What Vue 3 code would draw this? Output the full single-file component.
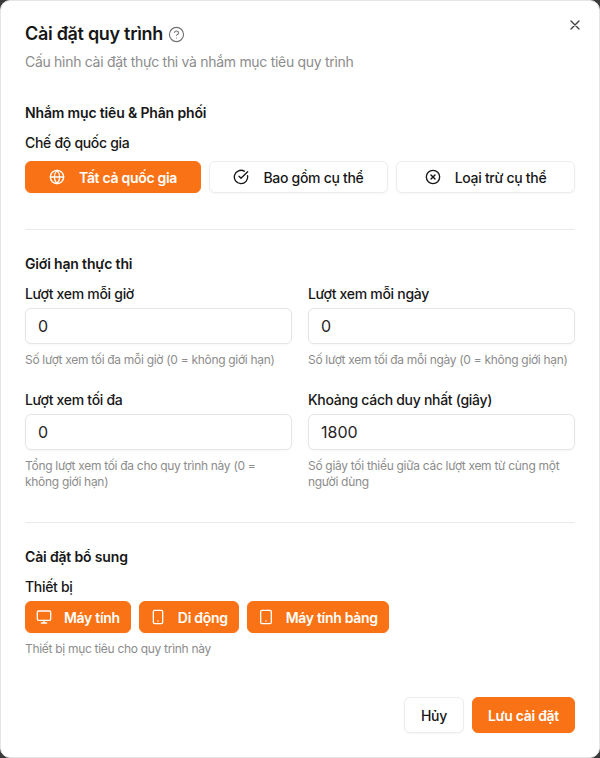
<template>
  <div class="backdrop">
    <div class="modal">
      <button class="close" aria-label="Đóng">
        <svg width="16" height="16" viewBox="0 0 24 24" fill="none" stroke="currentColor" stroke-width="2" stroke-linecap="round">
          <path d="M18 6 6 18M6 6l12 12" />
        </svg>
      </button>

      <header class="head">
        <h2 class="title">
          Cài đặt quy trình
          <svg width="17" height="17" viewBox="0 0 24 24" fill="none" stroke="#737373" stroke-width="1.6" stroke-linecap="round" stroke-linejoin="round">
            <circle cx="12" cy="12" r="10" />
            <path d="M9.1 9a3 3 0 0 1 5.8 1c0 2-3 3-3 3" />
            <path d="M12 17h.01" />
          </svg>
        </h2>
        <p class="sub">Cấu hình cài đặt thực thi và nhắm mục tiêu quy trình</p>
      </header>

      <section class="section first">
        <h3 class="sec-title">Nhắm mục tiêu &amp; Phân phối</h3>
        <div class="label mode-label">Chế độ quốc gia</div>
        <div class="modes">
          <button v-for="m in modes" :key="m.text" class="btn" :class="{ on: m.on }">
            <svg width="16" height="16" viewBox="0 0 24 24" fill="none" stroke="currentColor" stroke-width="2" stroke-linecap="round" stroke-linejoin="round">
              <path v-for="d in m.paths" :key="d" :d="d" />
            </svg>
            <span>{{ m.text }}</span>
          </button>
        </div>
      </section>

      <hr class="line" />

      <section class="section">
        <h3 class="sec-title">Giới hạn thực thi</h3>
        <div class="fields">
          <div v-for="f in fields" :key="f.label" class="field">
            <label class="label">{{ f.label }}</label>
            <input class="input" :value="f.value" />
            <p class="help">{{ f.help }}</p>
          </div>
        </div>
      </section>

      <hr class="line second" />

      <section class="section">
        <h3 class="sec-title">Cài đặt bổ sung</h3>
        <div class="label">Thiết bị</div>
        <div class="devices">
          <button v-for="d in devices" :key="d.text" class="btn on dev">
            <svg width="16" height="16" viewBox="0 0 24 24" fill="none" stroke="currentColor" stroke-width="2" stroke-linecap="round" stroke-linejoin="round">
              <rect :x="d.rect[0]" :y="d.rect[1]" :width="d.rect[2]" :height="d.rect[3]" rx="2" />
              <path :d="d.path" />
            </svg>
            <span>{{ d.text }}</span>
          </button>
        </div>
        <p class="help">Thiết bị mục tiêu cho quy trình này</p>
      </section>

      <footer class="foot">
        <button class="btn cancel">Hủy</button>
        <button class="btn on save">Lưu cài đặt</button>
      </footer>
    </div>
  </div>
</template>

<script setup>
const modes = [
  {
    text: 'Tất cả quốc gia',
    on: true,
    paths: [
      'M22 12a10 10 0 1 1-20 0 10 10 0 0 1 20 0Z',
      'M2 12h20',
      'M12 2a15 15 0 0 1 4 10 15 15 0 0 1-4 10 15 15 0 0 1-4-10 15 15 0 0 1 4-10Z',
    ],
  },
  {
    text: 'Bao gồm cụ thể',
    paths: ['M21.8 10A10 10 0 1 1 17 3.3', 'm9 11 3 3L22 4'],
  },
  {
    text: 'Loại trừ cụ thể',
    paths: ['M22 12a10 10 0 1 1-20 0 10 10 0 0 1 20 0Z', 'm15 9-6 6', 'm9 9 6 6'],
  },
]

const fields = [
  { label: 'Lượt xem mỗi giờ', value: '0', help: 'Số lượt xem tối đa mỗi giờ (0 = không giới hạn)' },
  { label: 'Lượt xem mỗi ngày', value: '0', help: 'Số lượt xem tối đa mỗi ngày (0 = không giới hạn)' },
  { label: 'Lượt xem tối đa', value: '0', help: 'Tổng lượt xem tối đa cho quy trình này (0 = không giới hạn)' },
  { label: 'Khoảng cách duy nhất (giây)', value: '1800', help: 'Số giây tối thiểu giữa các lượt xem từ cùng một người dùng' },
]

const devices = [
  { text: 'Máy tính', rect: [2, 3, 20, 14], path: 'M8 21h8M12 17v4' },
  { text: 'Di động', rect: [5, 2, 14, 20], path: 'M12 18h.01' },
  { text: 'Máy tính bảng', rect: [4, 2, 16, 20], path: 'M12 18h.01' },
]
</script>

<style>
html,
body {
  margin: 0;
  background: #3a3a3a;
}
</style>

<style scoped>
.backdrop {
  width: 600px;
  height: 758px;
  overflow: hidden;
  font-family: Inter, "Noto Sans", sans-serif;
  color: #171717;
  letter-spacing: -0.3px;
}

.modal {
  position: relative;
  box-sizing: border-box;
  width: 600px;
  height: 758px;
  padding: 24px 24px 24px;
  background: #fff;
  border: 1px solid #e5e5e5;
  border-radius: 10px;
  display: flex;
  flex-direction: column;
}

.close {
  position: absolute;
  top: 16px;
  right: 16px;
  padding: 0;
  border: 0;
  background: none;
  color: #404040;
  display: flex;
}

.head {
  height: 48px;
}

.title {
  margin: 0;
  font-size: 18px;
  line-height: 18px;
  font-weight: 600;
  display: flex;
  align-items: center;
  gap: 5px;
}

.sub {
  margin: 9px 0 0;
  font-size: 14px;
  line-height: 20px;
  color: #8c8c8c;
}

.section {
  display: flex;
  flex-direction: column;
}

.section.first {
  margin-top: 30px;
}

.sec-title {
  margin: 0 0 10px;
  font-size: 14px;
  line-height: 20px;
  font-weight: 600;
  letter-spacing: -0.16px;
}

.label {
  display: block;
  font-size: 14px;
  line-height: 20px;
  font-weight: 500;
  margin-bottom: 4px;
}

.mode-label {
  margin-bottom: 8px;
}

.modes {
  display: grid;
  grid-template-columns: 176px 179px 1fr;
  gap: 8px;
}

.btn {
  height: 32px;
  box-sizing: border-box;
  padding: 0 12px;
  border: 1px solid #ececec;
  border-radius: 6px;
  background: #fff;
  color: #171717;
  font: 500 14px Inter, "Noto Sans", sans-serif;
  letter-spacing: -0.3px;
  display: flex;
  align-items: center;
  justify-content: center;
  gap: 14px;
  box-shadow: 0 1px 2px rgba(0, 0, 0, 0.04);
}

.btn.on {
  background: #f97316;
  border-color: #f97316;
  color: #fff;
  font-weight: 600;
}

.line {
  width: 100%;
  margin: 36px 0 24px;
  border: 0;
  border-top: 1px solid #e9e9e9;
}

.line.second {
  margin: 32px 0 24px;
}

.fields {
  display: grid;
  grid-template-columns: 1fr 1fr;
  column-gap: 16px;
  row-gap: 22px;
}

.input {
  display: block;
  box-sizing: border-box;
  width: 100%;
  height: 36px;
  padding: 0 12px;
  border: 1px solid #e5e5e5;
  border-radius: 6px;
  background: #fff;
  color: #262626;
  font: 400 16px Inter, "Noto Sans", sans-serif;
  outline: none;
  box-shadow: 0 1px 2px rgba(0, 0, 0, 0.03);
}

.help {
  margin: 8px 0 0;
  font-size: 12px;
  line-height: 16px;
  color: #8c8c8c;
}

.devices {
  display: flex;
  gap: 8px;
}

.dev {
  padding: 0 10px;
  gap: 12px;
}

.foot {
  margin-top: auto;
  display: flex;
  justify-content: flex-end;
  gap: 8px;
}

.cancel,
.save {
  height: 36px;
}

.cancel {
  width: 60px;
  padding: 0;
}

.save {
  width: 103px;
  padding: 0;
}
</style>
